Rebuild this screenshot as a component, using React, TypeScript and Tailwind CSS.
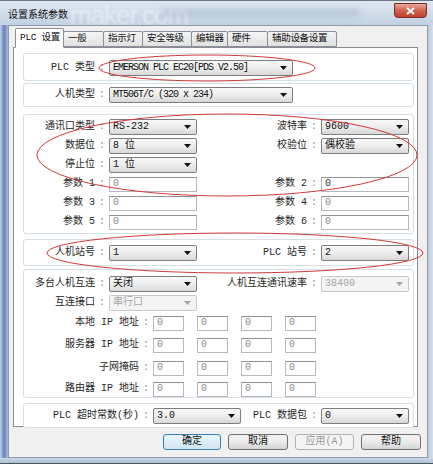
import React from "react";

const Arrow = ({ off }: { off?: boolean }) => (
  <svg width="7" height="4" viewBox="0 0 7 4" className="shrink-0">
    <path d="M0 0h7L3.5 4z" fill={off ? "#a8a8a8" : "#111"} />
  </svg>
);

const Sel = ({ v, w = "w-[88px]", off, tight }: { v: string; w?: string; off?: boolean; tight?: boolean }) => (
  <div
    className={`${w} h-[16px] shrink-0 flex items-center justify-between pl-[3px] pr-[5px] rounded-[2px] border ${
      off
        ? "border-[#c9c9c9] bg-[#f4f4f4] text-[#a4a4a4]"
        : "border-[#7d7d7d] bg-linear-to-b from-[#f8f8f8] via-[#ededed] to-[#d8d8d8] text-[#111]"
    }`}
  >
    <span className={`whitespace-pre leading-none ${tight ? "tracking-[-1px]" : ""}`}>{v}</span>
    <Arrow off={off} />
  </div>
);

const Inp = ({ w = "w-[88px]", v = "0", dark }: { w?: string; v?: string; dark?: boolean }) => (
  <div
    className={`${w} h-[15px] shrink-0 flex items-center pl-[3px] bg-white border border-[#b5b8be] border-t-[#8f9297] ${
      dark ? "text-[#333]" : "text-[#8a8a8a]"
    }`}
  >
    <span className="leading-none">{v}</span>
  </div>
);

const Lbl = ({ t, w }: { t: string; w: string }) => (
  <div className={`${w} shrink-0 flex justify-end items-center text-[#262626]`}>
    <span className="whitespace-pre leading-none">{t}</span>
    <span className="w-[14px] text-center text-[#8a8a8a] leading-none">:</span>
  </div>
);

const Tab = ({ t, w, on }: { t: string; w: string; on?: boolean }) => (
  <div
    className={`${w} shrink-0 flex items-center pl-[4px] border border-[#8c8f96] rounded-t-[2px] ${
      on
        ? "h-[20px] bg-white border-b-white -mb-[1px] z-10 relative"
        : "h-[16px] bg-linear-to-b from-[#f5f5f5] to-[#e1e1e1] -ml-[1px]"
    }`}
  >
    <span className="whitespace-pre leading-none text-[#111] text-[9.5px] tracking-[-0.3px]">{t}</span>
  </div>
);

const Btn = ({ t, w, focus, off }: { t: string; w: string; focus?: boolean; off?: boolean }) => (
  <div
    className={`${w} h-[16px] flex items-center justify-center rounded-[3px] border ${
      focus
        ? "border-[#3c7fb1] bg-linear-to-b from-[#eaf6fd] to-[#cfe6f4] text-[#111]"
        : off
        ? "border-[#adb2b5] bg-[#f4f4f4] text-[#9a9a9a]"
        : "border-[#707070] bg-linear-to-b from-[#f2f2f2] via-[#ebebeb] to-[#d5d5d5] text-[#111]"
    }`}
  >
    <span className="leading-none">{t}</span>
  </div>
);

const Group = ({ h, mt, children }: { h: string; mt: string; children: React.ReactNode }) => (
  <div className={`${h} ${mt} shrink-0 border border-[#d5dfe5] rounded-[3px] bg-white flex flex-col`}>{children}</div>
);

const Row = ({ mt, children }: { mt: string; children: React.ReactNode }) => (
  <div className={`${mt} h-[16px] flex items-center`}>{children}</div>
);

const IpRow = ({ t, mt }: { t: string; mt: string }) => (
  <Row mt={mt}>
    <Lbl t={t} w="w-[129px]" />
    <div className="flex gap-[13px]">
      <Inp w="w-[31px]" />
      <Inp w="w-[31px]" />
      <Inp w="w-[31px]" />
      <Inp w="w-[31px]" />
    </div>
  </Row>
);

export default function App() {
  return (
    <div className="w-[433px] h-[464px] relative overflow-hidden bg-[#c3d2e1] border-t border-[#6b7784] font-['Liberation_Mono','Noto_Sans_CJK_SC',monospace] text-[10px]">
      {/* title bar */}
      <div className="h-[24px] relative bg-linear-to-b from-[#dfe8f1] to-[#c2d2e2]">
        <span className="absolute left-[70px] top-[1px] text-[26px] leading-none text-white/50 blur-[1px] font-['Liberation_Sans',sans-serif] tracking-[-1px]">
          maker.com
        </span>
        <div className="absolute left-[160px] top-[8px] w-[200px] h-[8px] rounded-full bg-[#9fb1c6]/50 blur-[3px]" />
        <span className="absolute left-[8px] top-[8px] font-['Noto_Sans_CJK_SC',sans-serif] text-[10px] leading-none text-[#111]">
          设置系统参数
        </span>
        <div className="absolute left-[394px] top-[2px] w-[33px] h-[15px] rounded-b-[4px] border border-[#7a2a20] bg-linear-to-b from-[#e8a89a] via-[#d0624e] to-[#c2402b] flex items-center justify-center">
          <svg width="9" height="8" viewBox="0 0 9 8">
            <path d="M1 1l7 6M8 1L1 7" stroke="#fff" strokeWidth="2" />
          </svg>
        </div>
      </div>

      <div className="flex h-[433px]">
        <div className="w-[8px] bg-linear-to-r from-[#c6d4e3] via-[#6a7fc0] to-[#aab9d8]" />
        {/* client area */}
        <div className="w-[420px] bg-[#f0f0f0] flex flex-col pl-[4px] pr-[9px] border border-[#8d9aa8]">
          {/* tabs */}
          <div className="h-[21px] flex items-end pl-[2px]">
            <Tab t="PLC 设置" w="w-[49px]" on />
            <Tab t="一般" w="w-[41px]" />
            <Tab t="指示灯" w="w-[40px]" />
            <Tab t="安全等级" w="w-[50px]" />
            <Tab t="编辑器" w="w-[37px]" />
            <Tab t="硬件" w="w-[41px]" />
            <Tab t="辅助设备设置" w="w-[70px]" />
          </div>
          {/* panel */}
          <div className="h-[380px] bg-white border border-[#898c95] flex flex-col pl-[9px] pr-[3px] pt-[5px]">
            <Group h="h-[28px]" mt="mt-0">
              <Row mt="mt-[6px]">
                <Lbl t="PLC 类型" w="w-[85px]" />
                <Sel v="EMERSON PLC EC20[PDS V2.50]" w="w-[184px]" tight />
              </Row>
            </Group>
            <Group h="h-[24px]" mt="mt-[2px]">
              <Row mt="mt-[3px]">
                <Lbl t="人机类型" w="w-[85px]" />
                <Sel v="MT506T/C (320 x 234)" w="w-[184px]" tight />
              </Row>
            </Group>
            <Group h="h-[120px]" mt="mt-[7px]">
              <Row mt="mt-[4px]">
                <Lbl t="通讯口类型" w="w-[85px]" />
                <Sel v="RS-232" />
                <Lbl t="波特率" w="w-[124px]" />
                <Sel v="9600" />
              </Row>
              <Row mt="mt-[3px]">
                <Lbl t="数据位" w="w-[85px]" />
                <Sel v="8 位" />
                <Lbl t="校验位" w="w-[124px]" />
                <Sel v="偶校验" />
              </Row>
              <Row mt="mt-[3px]">
                <Lbl t="停止位" w="w-[85px]" />
                <Sel v="1 位" />
              </Row>
              <Row mt="mt-[3px]">
                <Lbl t="参数 1" w="w-[85px]" />
                <Inp />
                <Lbl t="参数 2" w="w-[124px]" />
                <Inp dark />
              </Row>
              <Row mt="mt-[3px]">
                <Lbl t="参数 3" w="w-[85px]" />
                <Inp />
                <Lbl t="参数 4" w="w-[124px]" />
                <Inp />
              </Row>
              <Row mt="mt-[3px]">
                <Lbl t="参数 5" w="w-[85px]" />
                <Inp />
                <Lbl t="参数 6" w="w-[124px]" />
                <Inp />
              </Row>
            </Group>
            <Group h="h-[27px]" mt="mt-[5px]">
              <Row mt="mt-[5px]">
                <Lbl t="人机站号" w="w-[85px]" />
                <Sel v="1" />
                <Lbl t="PLC 站号" w="w-[124px]" />
                <Sel v="2" />
              </Row>
            </Group>
            <Group h="h-[129px]" mt="mt-[3px]">
              <Row mt="mt-[6px]">
                <Lbl t="多台人机互连" w="w-[85px]" />
                <Sel v="关闭" />
                <Lbl t="人机互连通讯速率" w="w-[124px]" />
                <Sel v="38400" off />
              </Row>
              <Row mt="mt-[3px]">
                <Lbl t="互连接口" w="w-[85px]" />
                <Sel v="串行口" off />
              </Row>
              <IpRow t="本地 IP 地址" mt="mt-[4px]" />
              <IpRow t="服务器 IP 地址" mt="mt-[6px]" />
              <IpRow t="子网掩码" mt="mt-[7px]" />
              <IpRow t="路由器 IP 地址" mt="mt-[5px]" />
            </Group>
            <Group h="h-[25px]" mt="mt-[5px]">
              <Row mt="mt-[4px]">
                <Lbl t="PLC 超时常数(秒)" w="w-[129px]" />
                <Sel v="3.0" />
                <Lbl t="PLC 数据包" w="w-[80px]" />
                <Sel v="0" />
              </Row>
            </Group>
          </div>
          {/* buttons */}
          <div className="mt-[7px] flex justify-end gap-[7px] mr-[-3px]">
            <Btn t="确定" w="w-[58px]" focus />
            <Btn t="取消" w="w-[60px]" />
            <Btn t="应用(A)" w="w-[59px]" off />
            <Btn t="帮助" w="w-[60px]" />
          </div>
        </div>
        <div className="w-[5px] bg-linear-to-r from-[#b9c9da] to-[#d5e0eb]" />
      </div>
      <div className="h-[6px] bg-linear-to-b from-[#cbd8e6] to-[#aebfd2] border-b border-[#4a5563]" />

      {/* red annotation marks */}
      <svg className="absolute inset-0 pointer-events-none" width="433" height="464" viewBox="0 0 433 464">
        <ellipse cx="207" cy="67" rx="108" ry="13" fill="none" stroke="#d23a3a" strokeWidth="1" />
        <ellipse cx="227" cy="154" rx="190" ry="41" fill="none" stroke="#d23a3a" strokeWidth="1" />
        <ellipse cx="235" cy="252" rx="188" ry="20" fill="none" stroke="#d23a3a" strokeWidth="1" />
      </svg>
    </div>
  );
}
